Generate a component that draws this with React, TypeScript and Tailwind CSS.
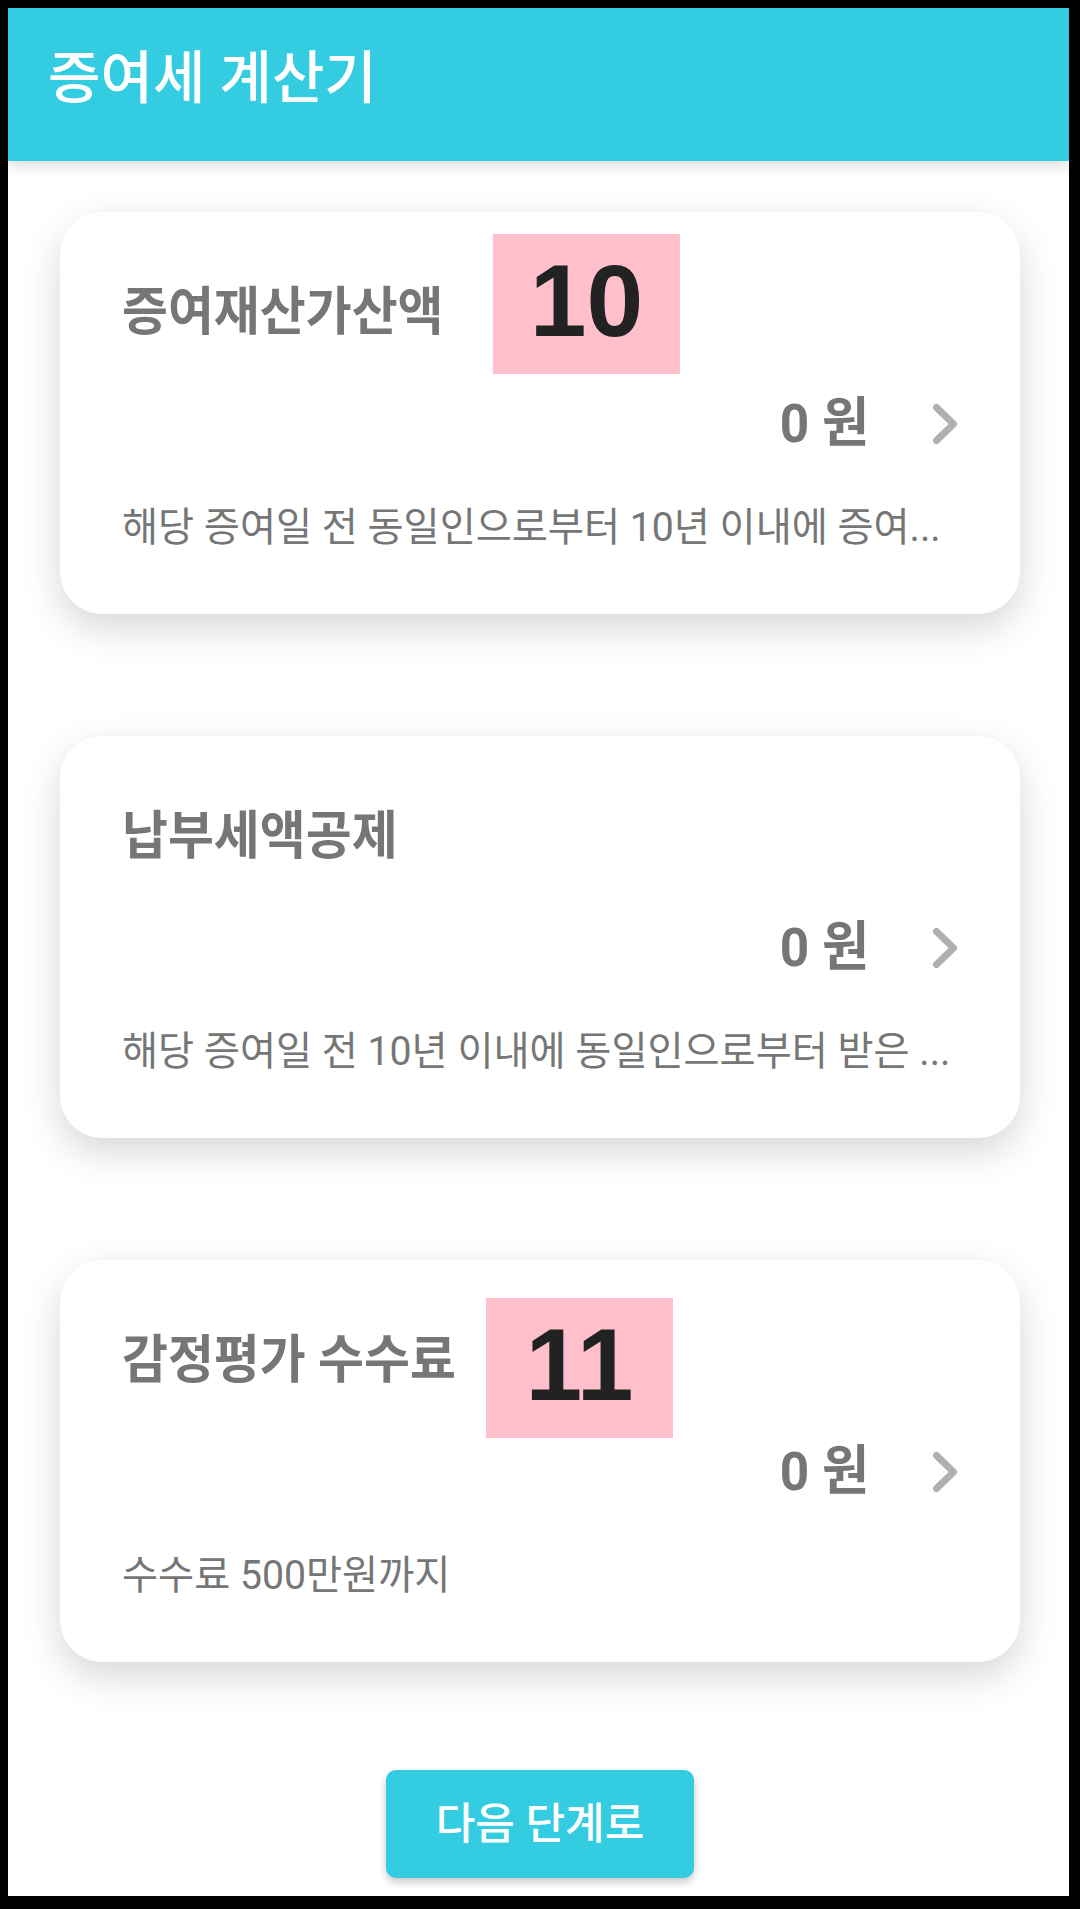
import React from "react";

const FONT = { fontFamily: 'Roboto, "Noto Sans CJK KR", sans-serif' };

function Chevron() {
  return (
    <svg width="26" height="42" viewBox="0 0 26 42" fill="none" className="shrink-0">
      <path d="M4.5 4.5 L21.5 21 L4.5 37.5" stroke="#b0b0b0" strokeWidth="7" strokeLinecap="round" strokeLinejoin="round" />
    </svg>
  );
}

type CardProps = {
  title: string;
  desc: string;
  label?: string;
  labelPos?: "a" | "b";
};

function Label({ text, pos }: { text: string; pos: "a" | "b" }) {
  const cls =
    pos === "a"
      ? "absolute left-[433px] top-[22px] flex h-[140px] w-[187px] items-center justify-center bg-[#ffc0cb] pb-[6px] text-[102px] font-bold leading-none text-[#222222]"
      : "absolute left-[426px] top-[38px] flex h-[140px] w-[187px] items-center justify-center bg-[#ffc0cb] pb-[6px] text-[102px] font-bold leading-none text-[#222222]";
  return (
    <div className={cls} style={{ fontFamily: '"Liberation Sans", Arial, sans-serif' }}>
      {text}
    </div>
  );
}

function Card({ title, desc, label, labelPos }: CardProps) {
  return (
    <div className="relative flex h-[402px] w-[960px] shrink-0 flex-col rounded-[42px] bg-white pl-[62px] pr-[62px] pt-[75px] shadow-[0_14px_38px_rgba(0,0,0,0.16)]">
      <div className="h-[52px] whitespace-nowrap text-[52px] font-bold leading-[52px] text-[#767676]">
        <span className="inline-block origin-left scale-x-[0.96]">{title}</span>
      </div>
      <div className="mt-[55px] flex h-[60px] items-center justify-end gap-[63px]">
        <span className="inline-block origin-right scale-x-[0.95] whitespace-nowrap text-[54px] font-bold leading-[54px] text-[#767676]">
          0 원
        </span>
        <Chevron />
      </div>
      <div className="mt-[54px] h-[40px] whitespace-nowrap text-[40px] leading-[40px] text-[#767676]">
        <span className="inline-block origin-left scale-x-[0.98]">{desc}</span>
      </div>
      {label && labelPos && <Label text={label} pos={labelPos} />}
    </div>
  );
}

export default function App() {
  return (
    <div className="h-[1909px] w-[1080px] bg-black pb-[13px] pl-[8px] pr-[11px] pt-[8px]" style={FONT}>
      <div className="flex h-[1888px] w-[1061px] flex-col overflow-hidden bg-white">
        <header className="relative z-10 h-[153px] shrink-0 bg-[#33cce0] pl-[40px] pt-[42px] shadow-[0_4px_14px_rgba(0,0,0,0.16)]">
          <h1 className="h-[57px] whitespace-nowrap text-[57px] font-medium leading-[57px] text-white">
            증여세 계산기
          </h1>
        </header>
        <main className="flex flex-col gap-[122px] pl-[52px] pt-[51px]">
          <Card
            title="증여재산가산액"
            desc="해당 증여일 전 동일인으로부터 10년 이내에 증여..."
            label="10"
            labelPos="a"
          />
          <Card title="납부세액공제" desc="해당 증여일 전 10년 이내에 동일인으로부터 받은 ..." />
          <Card title="감정평가 수수료" desc="수수료 500만원까지" label="11" labelPos="b" />
        </main>
        <div className="ml-[378px] mt-[108px] flex h-[108px] w-[308px] items-center justify-center rounded-[10px] bg-[#33cce0] shadow-[0_4px_8px_rgba(0,0,0,0.22)]">
          <span className="whitespace-nowrap text-[43px] font-medium leading-[43px] text-white">
            다음 단계로
          </span>
        </div>
      </div>
    </div>
  );
}
